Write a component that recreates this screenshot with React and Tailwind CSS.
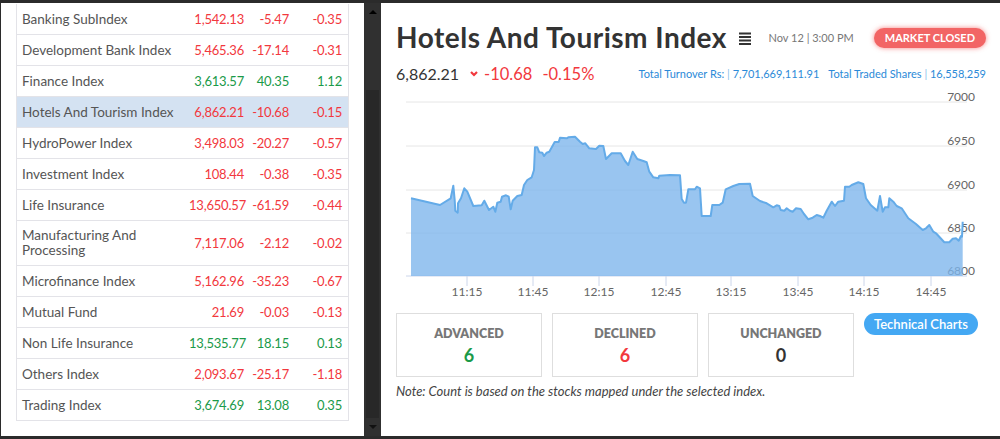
const rows = [
  { name: "Banking SubIndex", value: "1,542.13", change: "-5.47", pct: "-0.35", up: false },
  { name: "Development Bank Index", value: "5,465.36", change: "-17.14", pct: "-0.31", up: false },
  { name: "Finance Index", value: "3,613.57", change: "40.35", pct: "1.12", up: true },
  { name: "Hotels And Tourism Index", value: "6,862.21", change: "-10.68", pct: "-0.15", up: false, active: true },
  { name: "HydroPower Index", value: "3,498.03", change: "-20.27", pct: "-0.57", up: false },
  { name: "Investment Index", value: "108.44", change: "-0.38", pct: "-0.35", up: false },
  { name: "Life Insurance", value: "13,650.57", change: "-61.59", pct: "-0.44", up: false },
  { name: "Manufacturing And Processing", value: "7,117.06", change: "-2.12", pct: "-0.02", up: false, tall: true },
  { name: "Microfinance Index", value: "5,162.96", change: "-35.23", pct: "-0.67", up: false },
  { name: "Mutual Fund", value: "21.69", change: "-0.03", pct: "-0.13", up: false },
  { name: "Non Life Insurance", value: "13,535.77", change: "18.15", pct: "0.13", up: true },
  { name: "Others Index", value: "2,093.67", change: "-25.17", pct: "-1.18", up: false },
  { name: "Trading Index", value: "3,674.69", change: "13.08", pct: "0.35", up: true },
];

// traced in page coordinates
const pts = [
  [411, 198.3], [440, 205], [450.7, 198.3], [453.3, 185.7], [454.7, 200], [455.3, 210.7],
  [457.7, 212.7], [458, 203.3], [461, 198.3], [464.3, 188.3], [467.3, 191.7], [473.3, 206],
  [481.7, 205.3], [484.3, 200.7], [489, 210], [493.3, 206.7], [495.3, 211.7], [497.3, 202.7],
  [500.7, 201.7], [502, 196.7], [506, 195.3], [508.7, 196.7], [510.7, 209.3], [512.7, 200.7],
  [517.3, 196], [521.7, 195], [524, 185], [527.3, 180], [531.7, 177.3], [534, 170],
  [535, 147.3], [537.3, 147.3], [539.3, 152.3], [542.3, 152.7], [544, 156], [546.7, 152.7],
  [549.3, 151.7], [554.7, 142], [558.7, 142], [560, 137.7], [566.7, 138.3], [568.3, 137.3],
  [575, 136.7], [580, 141.7], [582.7, 144], [585.3, 143.3], [589.3, 148.3], [596, 149],
  [599.3, 145.7], [603.3, 146], [606, 159], [611.7, 153.3], [620.7, 153.3], [625, 161],
  [628.3, 165], [632.7, 151.7], [637.3, 159], [643.3, 161], [646.7, 162.3], [649.3, 171.7],
  [653.3, 177.3], [658.3, 178.3], [659.3, 175.7], [670, 175], [680, 175.3], [681.7, 199],
  [684, 202.7], [686, 202.7], [688.3, 189.3], [695, 189.3], [696.7, 186.7], [700, 188.3],
  [701.7, 216], [710.7, 216], [712.3, 205], [719.3, 205], [722.7, 202.7], [725.7, 189.3],
  [733.3, 186], [739.3, 184], [750, 183.7], [752.7, 196], [760, 201], [766.7, 203.3],
  [773.3, 207.3], [776.7, 205.3], [779.3, 206], [780.7, 210], [784.3, 210.7], [786.7, 208.3],
  [790, 210.7], [792.7, 211.7], [796, 208.3], [800.7, 209], [804, 214], [808.3, 219.3],
  [812.7, 217.7], [816.7, 215], [820, 216], [823.3, 217.7], [826.7, 210.7], [831.7, 201.7],
  [835, 206], [838.3, 201.7], [844, 200.7], [845, 186.7], [849.3, 186.7], [851.7, 185],
  [858.3, 182.3], [863.3, 184], [866, 198.3], [870.7, 205], [877.3, 210.7], [880, 196],
  [882.7, 211.7], [885, 207.3], [888.3, 207.3], [889.3, 198.3], [893.3, 201.7], [896.7, 206],
  [901.7, 208.3], [908.3, 218.3], [916, 224], [922.7, 230], [926, 228.3], [929.3, 225],
  [933.3, 231.7], [936, 233.3], [944.3, 242.3], [949.3, 242.3], [952.7, 238.7], [956, 238.3],
  [958.7, 240.7], [961, 236], [962, 236.7], [962.7, 221.7],
];

const line = pts.map(([x, y], i) => `${i ? "L" : "M"}${x} ${y}`).join(" ");
const area = `${line} L962.7 276 L411 276 Z`;
const grid = [
  { y: 102, label: "7000" },
  { y: 146, label: "6950" },
  { y: 190, label: "6900" },
  { y: 233, label: "6850" },
  { y: 276, label: "6800" },
];
const ticks = [
  [467, "11:15"], [533, "11:45"], [599, "12:15"], [666, "12:45"],
  [731, "13:15"], [798, "13:45"], [864, "14:15"], [931, "14:45"],
];

const IndexChart = () => (
  <svg width="604" height="216" className="block">
    <g transform="translate(-381,-84)">
      {grid.map((g) => (
        <g key={g.label}>
          <line x1="406" x2="967" y1={g.y} y2={g.y} stroke={g.y === 276 ? "#ccd6eb" : "#e6e6e6"} strokeWidth="1" />
          <text x="975" y={g.y - 1.5} textAnchor="end" fontSize="12" fill="#666">
            {g.label}
          </text>
        </g>
      ))}
      <path d={area} fill="#7cb5ec" fillOpacity="0.78" />
      <path d={line} fill="none" stroke="#64abe8" strokeWidth="2" strokeLinejoin="round" />
      {ticks.map(([x, t]) => (
        <g key={t}>
          <line x1={x} x2={x} y1="276" y2="286" stroke="#ccd6eb" />
          <text x={x} y="295.5" textAnchor="middle" fontSize="12" fill="#666">
            {t}
          </text>
        </g>
      ))}
    </g>
  </svg>
);

const CountBox = ({ label, value, color }) => (
  <div className="flex h-[64px] w-[146px] shrink-0 flex-col items-center justify-center border border-[#dedede]">
    <p className="text-[12.5px] font-extrabold leading-4 text-[#777]">{label}</p>
    <p className={`mt-[3px] text-[18px] font-bold leading-5 ${color}`}>{value}</p>
  </div>
);

const tone = (up) => (up ? "text-[#1b9a49]" : "text-[#f2383d]");

export default function App() {
  return (
    <div
      className="flex h-[439px] w-[1000px] overflow-hidden bg-[#2b2b2b] py-[3px] pl-[1px]"
      style={{ fontFamily: "Lato, 'Noto Sans', sans-serif" }}
    >
      {/* index list */}
      <div className="w-[363px] shrink-0 bg-white pl-[15px] pt-[1px]">
        <div className="w-[333px] border-x border-[#e3e3e8]">
          {rows.map((r) => (
            <div
              key={r.name}
              className={`flex items-center border-b border-[#e3e3e8] pr-[6px] leading-[15px] ${r.tall ? "h-[45px]" : "h-[31px]"} ${r.active ? "bg-[#d4e2f2]" : ""}`}
            >
              <span className="w-[172px] shrink-0 pl-[5px] text-[13.5px] text-[#555]">{r.name}</span>
              <span className={`w-[55px] shrink-0 whitespace-nowrap text-right text-[13px] tracking-[-0.2px] ${tone(r.up)}`}>{r.value}</span>
              <span className={`w-[45px] shrink-0 text-right text-[13px] tracking-[-0.2px] ${tone(r.up)}`}>{r.change}</span>
              <span className={`flex-1 text-right text-[13px] tracking-[-0.2px] ${tone(r.up)}`}>{r.pct}</span>
            </div>
          ))}
        </div>
      </div>

      {/* scrollbar */}
      <div className="flex w-[17px] shrink-0 flex-col items-center bg-[#303030]">
        <div className="mt-[7px] h-0 w-0 border-x-[4px] border-b-[4px] border-x-transparent border-b-black" />
        <div className="mt-[76px] h-[328px] w-[13px] bg-[#282828]" />
        <div className="mt-[7px] h-0 w-0 border-x-[4px] border-t-[4px] border-x-transparent border-t-[#111]" />
      </div>

      {/* detail panel */}
      <div className="min-w-0 flex-1 bg-white pl-[15px] pr-[14px] pt-[17px]">
        <div className="flex h-[34px] items-center">
          <h1 className="whitespace-nowrap text-[28px] font-bold leading-[34px] tracking-[0.5px] text-[#333]">Hotels And Tourism Index</h1>
          <svg width="12" height="13" viewBox="0 0 12 13" className="ml-[12px] mt-[2px] shrink-0">
            <rect x="0" y="0.5" width="12" height="2" fill="#333" />
            <rect x="0" y="4" width="12" height="2" fill="#333" />
            <rect x="0" y="7.5" width="12" height="2" fill="#333" />
            <rect x="0" y="11" width="12" height="2" fill="#333" />
          </svg>
          <span className="ml-auto mt-[2px] whitespace-nowrap text-[11px] text-[#777]">Nov 12 | 3:00 PM</span>
          <span className="ml-[20px] mt-[2px] whitespace-nowrap rounded-full bg-[#f26565] px-[11px] py-[3px] text-[11px] font-bold leading-[14px] text-white shadow-[0_0_5px_rgba(242,80,80,0.7)]">
            MARKET CLOSED
          </span>
        </div>

        <div className="mt-[10px] flex h-[20px] items-center whitespace-nowrap">
          <span className="text-[16px] text-[#333]">6,862.21</span>
          <svg width="8" height="6" viewBox="0 0 8 6" className="ml-[11px]">
            <polyline points="1,1 4,4 7,1" fill="none" stroke="#f2383d" strokeWidth="2.2" />
          </svg>
          <span className="ml-[6px] text-[16.5px] text-[#f2383d]">-10.68</span>
          <span className="ml-[10px] text-[16.5px] text-[#f2383d]">-0.15%</span>
          <span className="ml-auto text-[11px] text-[#2b8ad8]">
            Total Turnover Rs: <span className="text-[#8cc0ea]">|</span> 7,701,669,111.91
          </span>
          <span className="ml-[9px] text-[11px] text-[#2b8ad8]">
            Total Traded Shares <span className="text-[#8cc0ea]">|</span> 16,558,259
          </span>
        </div>

        <div className="-ml-[15px]">
          <IndexChart />
        </div>

        <div className="mt-[13px] flex items-start gap-[10px]">
          <CountBox label="ADVANCED" value="6" color="text-[#1b9a49]" />
          <CountBox label="DECLINED" value="6" color="text-[#f2383d]" />
          <CountBox label="UNCHANGED" value="0" color="text-[#333]" />
          <button className="whitespace-nowrap rounded-full bg-[#44a8f3] px-[10px] py-[2px] text-[13px] font-semibold leading-[18px] text-white">
            Technical Charts
          </button>
        </div>

        <p className="mt-[6px] text-[13px] italic leading-4 text-[#444]">
          Note: Count is based on the stocks mapped under the selected index.
        </p>
      </div>
    </div>
  );
}
